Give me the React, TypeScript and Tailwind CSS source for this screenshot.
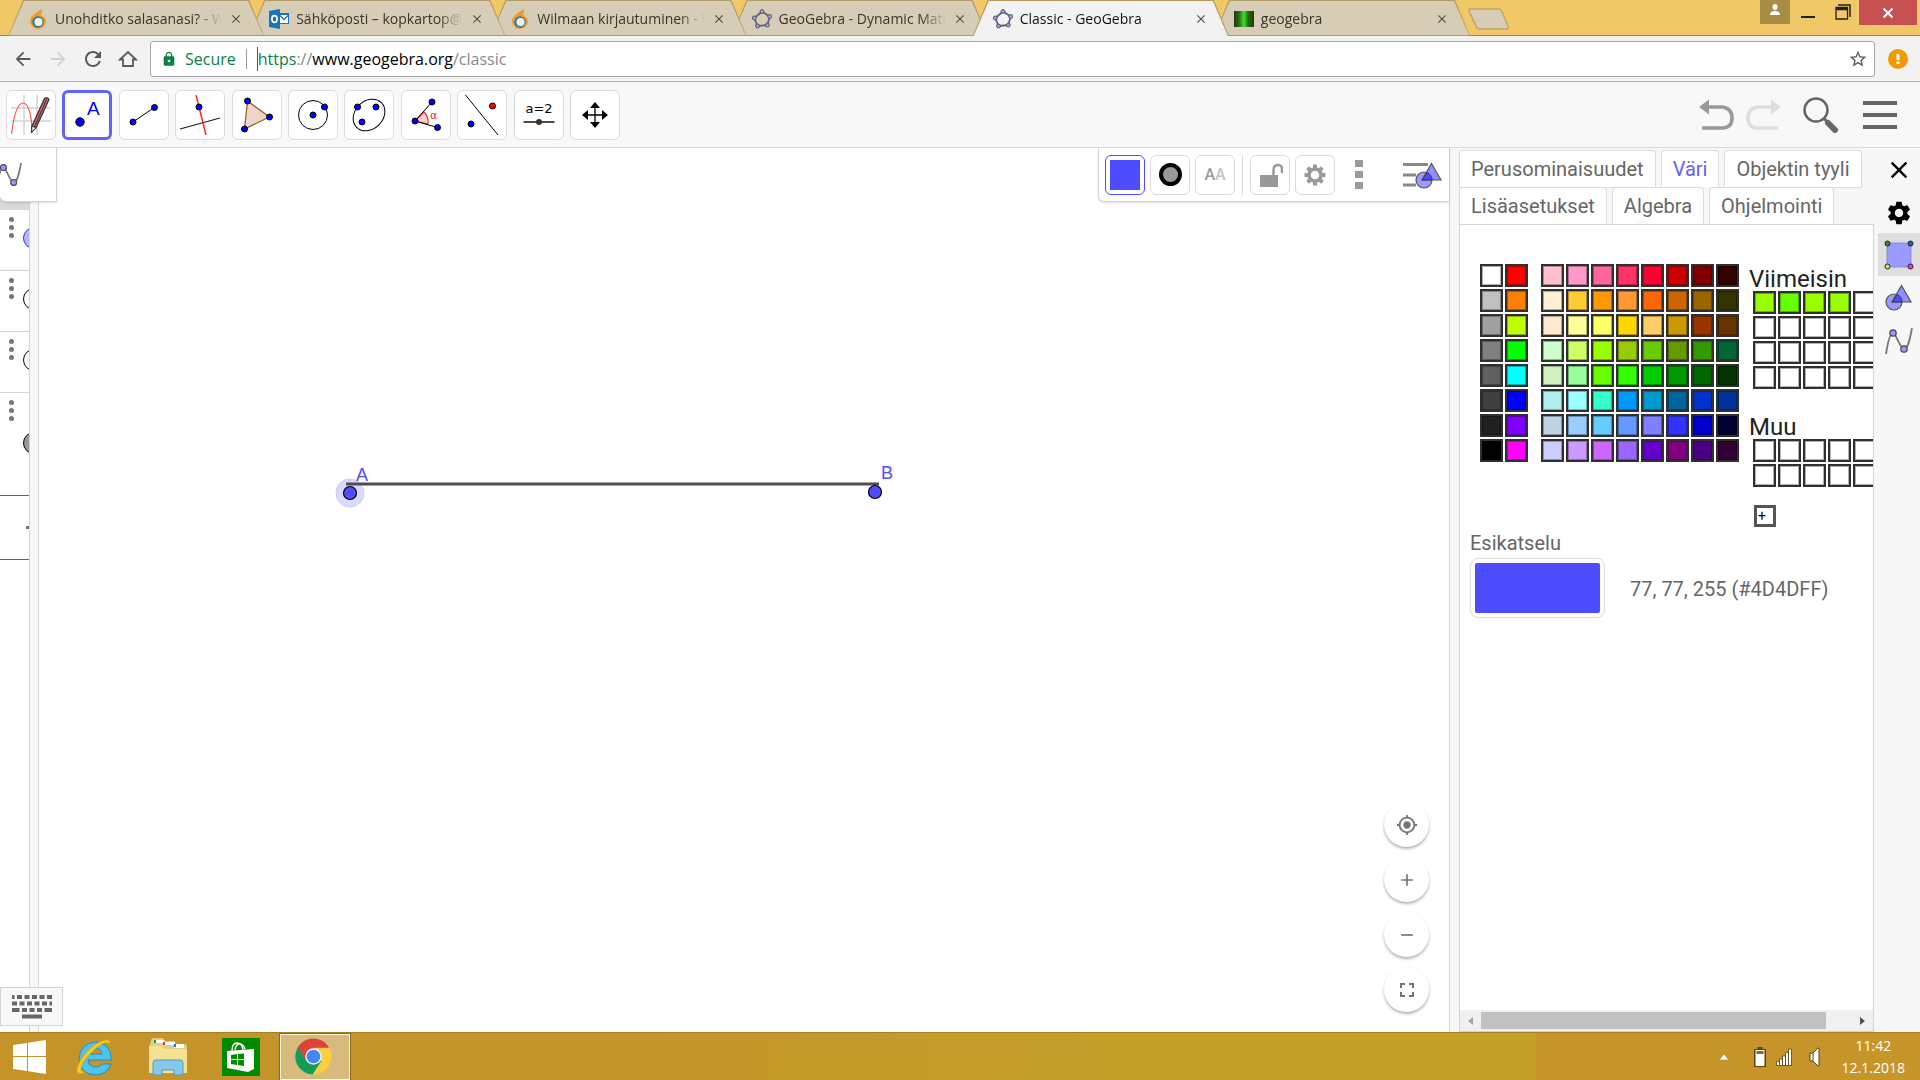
import React from "react";
import {
  MdAdd, MdArrowBack, MdArrowForward, MdClose, MdFullscreen, MdLock,
  MdMyLocation, MdRefresh, MdRemove, MdSettings, MdStarBorder,
} from "react-icons/md";

const UI = "font-['Open_Sans','Noto_Sans',sans-serif]";
const ROBOTO = "font-['Roboto',sans-serif]";

/* ---------- browser chrome ---------- */

const Flame = () => (
  <svg viewBox="0 0 18 20" className="h-[20px] w-[18px]">
    <path d="M13 0C9 3 1 6 1 12.500a8 7.500 0 0 0 16 0C17 9 14 7 11.500 5.500 13 4 13.500 2 13 0Z" fill="#ee9a2d" />
    <circle cx="9" cy="13" r="5.800" fill="#2d7fa0" />
    <circle cx="9.500" cy="13" r="4" fill="#f6f1e6" />
  </svg>
);

const Outlook = () => (
  <svg viewBox="0 0 20 20" className="h-[20px] w-[20px]">
    <rect x="10" y="4" width="10" height="11" fill="#1c74b8" />
    <path d="M11 6h8v8h-8z" fill="#fff" />
    <path d="M11 6.500l4 4 4-4" stroke="#1c74b8" strokeWidth="1.300" fill="none" />
    <path d="M0 2l11-2v20L0 18z" fill="#1c74b8" />
    <ellipse cx="5.500" cy="10" rx="2.600" ry="3.400" fill="none" stroke="#fff" strokeWidth="1.600" />
  </svg>
);

const Geo = () => (
  <svg viewBox="0 0 20 20" className="h-[20px] w-[20px]">
    <path d="M10 2.500L17.700 7.500 15.300 16 5.500 17 2.300 9z" fill="none" stroke="#666" strokeWidth="1.800" strokeLinejoin="round" />
    {[[10, 2.5], [17.7, 7.5], [15.3, 16], [5.5, 17], [2.3, 9]].map(([x, y]) => (
      <circle key={x} cx={x} cy={y} r="2" fill="#9999ff" stroke="#444" strokeWidth="0.800" />
    ))}
  </svg>
);

const Matrix = () => (
  <span className="block h-4 w-5 bg-[linear-gradient(90deg,#1c3a0c,#2c6a12_25%,#3ce22a_50%,#2c6a12_70%,#1c3a0c)]" />
);

const tabs = [
  { title: "Unohditko salasanasi? - Wilma", icon: <Flame />, z: "z-[6]" },
  { title: "Sähköposti – kopkartop@edu", icon: <Outlook />, z: "z-[5]" },
  { title: "Wilmaan kirjautuminen - Wilma", icon: <Flame />, z: "z-[4]" },
  { title: "GeoGebra - Dynamic Mathematics", icon: <Geo />, z: "z-[3]" },
  { title: "Classic - GeoGebra", icon: <Geo />, z: "z-10", active: true },
  { title: "geogebra", icon: <Matrix />, z: "z-[1]" },
];

const TabStrip = () => (
  <header className="relative flex h-9 items-start border-b border-[#9d834c] bg-[#f0c868] pl-2">
    <div role="tablist" className="-mb-px flex h-9 min-w-0 max-w-[1462px] flex-1 pr-[15px]">
      {tabs.map((t) => (
        <div key={t.title} role="tab" aria-selected={!!t.active} className={`relative -mr-[15px] h-9 min-w-0 flex-1 ${t.z}`}>
          <span className={`absolute inset-0 [clip-path:polygon(0_100%,15px_0,calc(100%-15px)_0,100%_100%)] ${t.active ? "bg-[#b8975a]" : "bg-[#b09a68]"}`} />
          <span className={`absolute inset-x-px top-px [clip-path:polygon(0_100%,15px_0,calc(100%-15px)_0,100%_100%)] ${t.active ? "bottom-0 bg-[#f2f2f2]" : "bottom-px bg-[#d7cdb7]"}`} />
          <div className={`relative flex h-9 items-center gap-[7px] pl-5 pr-[21px] pt-[2px] ${t.active ? "text-[#111]" : "text-[#38342a]"}`}>
            <span className="flex w-5 shrink-0 justify-center">{t.icon}</span>
            <span className="min-w-0 flex-1 overflow-hidden whitespace-nowrap text-sm [mask-image:linear-gradient(90deg,#000_85%,transparent)]">{t.title}</span>
            <button aria-label={`Close ${t.title}`}><MdClose className="h-[14px] w-[14px] text-[#55503f]" /></button>
          </div>
        </div>
      ))}
    </div>
    <button aria-label="New tab" className="-ml-[2px] mt-2">
      <svg viewBox="0 0 42 22" className="h-[22px] w-[42px]">
        <path d="M2 1h29q2 0 3 3l6 14q1 3-1 3H12q-3 0-4-3L1 3q0-2 1-2z" fill="#d7cdb7" stroke="#c2a566" strokeWidth="1.500" />
      </svg>
    </button>
    <div className="ml-auto flex items-start pr-[3px]">
      <button aria-label="Profile" className="flex h-6 w-[30px] justify-center bg-[#a88d49] pt-1">
        <svg viewBox="0 0 12 12" className="h-3 w-3"><ellipse cx="6" cy="3" rx="2.500" ry="3" fill="#fff" /><path d="M1 11q0-4 5-4t5 4z" fill="#fff" /></svg>
      </button>
      <button aria-label="Minimize" className="ml-[11px] mt-4 h-[2px] w-[14px] bg-[#222]" />
      <button aria-label="Restore" className="ml-5 mt-1">
        <svg viewBox="0 0 16 16" className="h-4 w-4"><path d="M3 1h12v12" fill="none" stroke="#222" strokeWidth="1.500" /><path d="M1 3.500h11.500V15H1z" fill="none" stroke="#222" strokeWidth="1.300" /><path d="M1 5h11.500" stroke="#222" strokeWidth="2.500" /></svg>
      </button>
      <button aria-label="Close" className="ml-2 flex h-[25px] w-[58px] items-center justify-center bg-[#c75050]">
        <svg viewBox="0 0 10 10" className="h-[10px] w-[10px]"><path d="M0.500 0.500l9 9M9.500 0.500l-9 9" stroke="#fff" strokeWidth="2" /></svg>
      </button>
    </div>
  </header>
);

const AddressBar = () => (
  <div className="flex h-[46px] items-center border-b border-[#b5b5b5] bg-[#f2f2f2] pl-3 pr-3 text-[#5a5a5a]">
    <button aria-label="Back"><MdArrowBack className="h-[22px] w-[22px]" /></button>
    <button aria-label="Forward" className="ml-[13px] text-[#d0d0d0]"><MdArrowForward className="h-[22px] w-[22px]" /></button>
    <button aria-label="Reload" className="ml-3"><MdRefresh className="h-6 w-6" /></button>
    <button aria-label="Home" className="ml-[13px]">
      <svg viewBox="0 0 20 20" className="h-5 w-5"><path d="M2 10.500L10 3l8 7.500h-3V17H5v-6.500z" fill="none" stroke="currentColor" strokeWidth="1.800" /></svg>
    </button>
    <div className="ml-3 flex h-9 flex-1 items-center rounded-[3px] border border-[#a6a6a6] bg-white pl-[10px] pr-[6px]">
      <MdLock className="h-4 w-4 text-[#0b8043]" />
      <span className={`ml-2 text-base text-[#0b8043] ${UI}`}>Secure</span>
      <span className="mx-[10px] h-5 w-px bg-[#999]" />
      <span className="h-6 w-px bg-[#555]" />
      <a href="https://www.geogebra.org/classic" className={`text-base text-[#888] ${UI}`}>
        <span className="text-[#0b8043]">https</span>://<span className="text-black">www.geogebra.org</span>/classic
      </a>
      <button aria-label="Bookmark" className="ml-auto"><MdStarBorder className="h-5 w-5" /></button>
    </div>
    <button aria-label="Update" className="ml-[13px] flex h-5 w-5 items-center justify-center rounded-full bg-[#f29900]">
      <svg viewBox="0 0 4 12" className="h-3 w-1"><path d="M0.500 1h3v6h-3zM0.500 8.500h3v2.500h-3z" fill="#fff" /></svg>
    </button>
  </div>
);

/* ---------- GeoGebra toolbar ---------- */

const Dot = ({ x, y, r = 3, fill = "#0000ff" }: { x: number; y: number; r?: number; fill?: string }) => (
  <circle cx={x} cy={y} r={r} fill={fill} stroke="#000" strokeWidth="1" />
);

const tools = [
  { name: "Freehand", art: <>
    <path d="M18 5v40M31 5v40M5 18h40M5 31h40" stroke="#d4d4d4" strokeWidth="1.500" />
    <path d="M5.500 44C8 24 12 13 17 13s9 11 9 30" fill="none" stroke="#f55" strokeWidth="1.200" />
    <path d="M38.500 8.500q3-2 4.500 1L30 38l-4.500 4 .500-6z" fill="#c66" stroke="#333" strokeWidth="1.200" />
    <path d="M40.500 9.500L28.500 37" stroke="#333" strokeWidth="1" /><path d="M25.500 42l.500-6 4 2z" fill="#fff" stroke="#333" />
  </> },
  { name: "Point", active: true, art: <><Dot x={18} y={32} r={4.2} /><text x="25" y="25" fontSize="19" fill="#0000ff" fontFamily="Liberation Sans">A</text></> },
  { name: "Segment", art: <><path d="M14 32L36 17" stroke="#000" /><Dot x={14} y={32} /><Dot x={35.5} y={17.5} /></> },
  { name: "Perpendicular line", art: <><path d="M5 39L45 28" stroke="#311" strokeWidth="1.200" /><path d="M21 5l10 40" stroke="#f22" strokeWidth="1.400" /><Dot x={24} y={17} /></> },
  { name: "Polygon", art: <><path d="M15.500 11L37.500 27 12.500 39z" fill="#ecd6cc" stroke="#a0521f" strokeWidth="1.200" /><Dot x={15.5} y={11} /><Dot x={37.5} y={27} /><Dot x={12.5} y={39} /></> },
  { name: "Circle", art: <><circle cx="25" cy="25" r="14.500" fill="none" stroke="#000" /><Dot x={25} y={25} /><Dot x={36.5} y={17} /></> },
  { name: "Ellipse", art: <><ellipse cx="25" cy="25" rx="17.500" ry="14" transform="rotate(-45 25 25)" fill="none" stroke="#000" /><Dot x={13.5} y={17} /><Dot x={32} y={17} /><Dot x={18} y={32} /></> },
  { name: "Angle", art: <><path d="M14 31L23 22Q28 27 27 34z" fill="#fcc" stroke="#f22" strokeWidth="1.200" /><path d="M31 12L14 31l22.500 6.500" fill="none" stroke="#000" /><text x="29" y="29" fontSize="11" fill="#f22" fontFamily="DejaVu Sans">α</text><Dot x={14} y={31} /><Dot x={31} y={12} /><Dot x={36.5} y={37.5} /></> },
  { name: "Reflect", art: <><path d="M8.500 5L41 45" stroke="#000" /><Dot x={35.5} y={16} fill="#f00" /><Dot x={14} y={34} /></> },
  { name: "Slider", art: <><text x="25" y="23" textAnchor="middle" fontSize="13" fontFamily="DejaVu Sans" fill="#000">a=2</text><path d="M9.500 32h31" stroke="#000" strokeWidth="1.400" /><circle cx="25" cy="32" r="3" fill="#333" /></> },
  { name: "Move view", art: <><path d="M25 15v20M15 25h20" stroke="#000" strokeWidth="1.300" /><path d="M25 12l5 6H20zM25 38l5-6H20zM12 25l6-5v10zM38 25l-6-5v10z" fill="#000" /></> },
];

const Toolbar = () => (
  <nav className="flex h-[66px] items-center justify-between border-b border-[#d9d9d9] bg-[#f8f8f8] pl-[6px] pr-[23px]">
    <div className="flex w-[614px] justify-between">
      {tools.map((t) => (
        <button key={t.name} aria-label={t.name} className={`flex h-[50px] w-[50px] items-center justify-center rounded-md bg-white ${t.active ? "border-[3px] border-[#6161ff]" : "border border-[#dcdcdc]"}`}>
          <svg viewBox="0 0 50 50" className="h-[50px] w-[50px] shrink-0">{t.art}</svg>
        </button>
      ))}
    </div>
    <div className="flex items-center">
      <button aria-label="Undo"><svg viewBox="0 0 36 32" className="h-8 w-9"><path d="M3 29h20q10 0 10-10T23 8H9" fill="none" stroke="#999" strokeWidth="3.500" /><path d="M0 8l10-7.500v15z" fill="#999" /></svg></button>
      <button aria-label="Redo" className="ml-[10px]"><svg viewBox="0 0 36 32" className="h-8 w-9"><path d="M33 29H13Q3 29 3 19T13 8h14" fill="none" stroke="#dedede" strokeWidth="3.500" /><path d="M36 8L26 .500v15z" fill="#dedede" /></svg></button>
      <button aria-label="Search" className="ml-[22px]"><svg viewBox="0 0 36 36" className="h-9 w-9"><circle cx="13" cy="13" r="11.500" fill="none" stroke="#666" strokeWidth="2.500" /><path d="M20.500 21l4 4" stroke="#666" strokeWidth="3" /><path d="M25 26l7 7" stroke="#666" strokeWidth="6" strokeLinecap="round" /></svg></button>
      <button aria-label="Menu" className="ml-6 flex w-[34px] flex-col gap-2"><span className="h-1 bg-[#666]" /><span className="h-1 bg-[#666]" /><span className="h-1 bg-[#666]" /></button>
    </div>
  </nav>
);

/* ---------- shared drawings ---------- */

const Curve = () => (
  <svg viewBox="0 0 28 28" className="h-7 w-7">
    <path d="M1 27C3 14 5 6 8 6s7 16 11 16S25 12 27 1" fill="none" stroke="#777" strokeWidth="1.800" />
    <circle cx="8" cy="6" r="3.200" fill="#9999ff" stroke="#445" strokeWidth="1.200" />
    <circle cx="19" cy="22" r="3.200" fill="#9999ff" stroke="#445" strokeWidth="1.200" />
  </svg>
);

const ShapeArt = () => (
  <>
    <circle cx="9" cy="18" r="8" fill="#9999ff" stroke="#555" strokeWidth="1.200" />
    <path d="M16.500 1.500L26 18H7z" fill="#8f8fff" stroke="#555" strokeWidth="1.200" />
    <path d="M12.300 10.700a8 8 0 0 1 4.700 7.300H7z" fill="#4d4dff" stroke="#335" strokeWidth="1" />
  </>
);

/* ---------- algebra list ---------- */

const Menu3 = () => (
  <span className="flex flex-col items-center gap-[3px]">
    <i className="h-[5px] w-[5px] rounded-full bg-[#757575]" /><i className="h-[5px] w-[5px] rounded-full bg-[#757575]" /><i className="h-[5px] w-[5px] rounded-full bg-[#757575]" />
  </span>
);

const rows = [
  { id: 1, box: "h-[61px]", mark: "mt-[10px] border-[#3333dd] bg-[#b8b8ff]" },
  { id: 2, box: "h-[61px]", mark: "mt-[10px] border-black bg-white" },
  { id: 3, box: "h-[61px]", mark: "mt-[10px] border-black bg-white" },
  { id: 4, box: "h-[103px]", mark: "mt-[32px] border-black bg-[#999]" },
];

const AlgebraList = () => (
  <aside className="flex w-[30px] shrink-0 flex-col overflow-hidden border-r border-[#d4d4d4] bg-white">
    <div className="h-[62px] shrink-0 bg-[#d9d9d9]" />
    {rows.map((r) => (
      <div key={r.id} className={`flex shrink-0 items-start border-b pl-[9px] pt-[7px] ${r.box} ${r.id === 4 ? "border-[#5b4fd6]" : "border-[#d4d4d4]"}`}>
        <button aria-label={`Row ${r.id} menu`}><Menu3 /></button>
        <span className={`ml-[9px] h-[22px] w-[22px] shrink-0 rounded-full border ${r.mark}`} />
      </div>
    ))}
    <div className="flex h-16 shrink-0 items-center justify-end border-b border-[#5b4fd6]"><span className="h-[3px] w-[3px] bg-[#777]" /></div>
  </aside>
);

/* ---------- graphics view ---------- */

const sb = "flex h-10 w-10 items-center justify-center rounded-md border bg-white";

const StyleBar = () => (
  <div className="absolute right-0 top-0 flex h-[54px] items-center gap-[5px] rounded-bl-md border-b border-l border-[#d4d4d4] bg-white pl-[6px] pr-[7px] shadow-sm">
    <button aria-label="Colour" className={`${sb} border-[#4d4dff]`}><span className="h-[30px] w-[30px] bg-[#4d4dff]" /></button>
    <button aria-label="Point style" className={`${sb} border-[#dcdcdc]`}><span className="h-[23px] w-[23px] rounded-full border-4 border-black bg-[#999]" /></button>
    <button aria-label="Label style" className={`${sb} border-[#dcdcdc] text-base font-medium text-[#999] ${ROBOTO}`}>A<span className="text-[#c4c4c4]">A</span></button>
    <span className="mx-[2px] h-10 w-px bg-[#dcdcdc]" />
    <button aria-label="Lock" className={`${sb} border-[#dcdcdc]`}>
      <svg viewBox="0 0 26 26" className="h-[26px] w-[26px]"><path d="M3 13h18v12H3z" fill="#999" /><path d="M16.500 13V8q0-5 4.500-5t4 5v3" fill="none" stroke="#999" strokeWidth="2.500" /></svg>
    </button>
    <button aria-label="Settings" className={`${sb} border-[#dcdcdc]`}>
      <svg viewBox="0 0 24 24" className="h-6 w-6" stroke="#999" fill="none"><circle cx="12" cy="12" r="6" strokeWidth="3.500" />
        <path d="M12 1.500v4M12 18.500v4M1.500 12h4M18.500 12h4M4.600 4.600l3 3M16.400 16.400l3 3M4.600 19.400l3-3M16.400 7.600l3-3" strokeWidth="4" /></svg>
    </button>
    <button aria-label="More" className="ml-[15px] flex flex-col gap-1"><span className="h-[7px] w-2 bg-[#999]" /><span className="h-[7px] w-2 bg-[#999]" /><span className="h-[7px] w-2 bg-[#999]" /></button>
    <button aria-label="Style bar" className="ml-[34px]">
      <svg viewBox="0 0 40 28" className="h-7 w-10"><path d="M1 3.500h25M1 14h13M1 24h13" stroke="#888" strokeWidth="3" /><g transform="translate(13 1)"><ShapeArt /></g></svg>
    </button>
  </div>
);

const zoomBtns = [
  { name: "Centre", icon: <MdMyLocation className="h-[22px] w-[22px]" /> },
  { name: "Zoom in", icon: <MdAdd className="h-5 w-5" /> },
  { name: "Zoom out", icon: <MdRemove className="h-5 w-5" /> },
  { name: "Full screen", icon: <MdFullscreen className="h-6 w-6" /> },
];

const Graphics = () => (
  <section className="relative min-w-0 flex-1 border-x border-[#d4d4d4] bg-white">
    <svg className="absolute left-0 top-0 h-full w-full" aria-label="Segment AB">
      <circle cx="311" cy="345" r="14" fill="#dadaff" stroke="#ccccf8" />
      <path d="M307 336h533" stroke="#4d4d4d" strokeWidth="3" />
      <circle cx="311" cy="345" r="6.500" fill="#4d4dff" stroke="#000" strokeWidth="1.200" />
      <circle cx="836" cy="344" r="6.500" fill="#4d4dff" stroke="#000" strokeWidth="1.200" />
      <text x="317" y="333" fontSize="18" fill="#4d4dff" fontFamily="Liberation Sans">A</text>
      <text x="842" y="331" fontSize="18" fill="#4d4dff" fontFamily="Liberation Sans">B</text>
    </svg>
    <StyleBar />
    <div className="absolute bottom-5 right-5 flex flex-col gap-[10px]">
      {zoomBtns.map((b) => (
        <button key={b.name} aria-label={b.name} className="flex h-[45px] w-[45px] items-center justify-center rounded-full bg-white text-[#757575] shadow-[0_2px_3px_rgba(0,0,0,0.3)]">{b.icon}</button>
      ))}
    </div>
  </section>
);

/* ---------- properties panel ---------- */

const tabRows = [["Perusominaisuudet", "Väri", "Objektin tyyli"], ["Lisäasetukset", "Algebra", "Ohjelmointi"]];
const basics = [
  ["#fff", "#f00"], ["#c0c0c0", "#ff8000"], ["#a0a0a0", "#bfff00"], ["#808080", "#0f0"],
  ["#606060", "#0ff"], ["#404040", "#00f"], ["#202020", "#8000ff"], ["#000", "#f0f"],
];
const palette = [
  ["#ffc0cb", "#ff99cc", "#ff6699", "#ff3366", "#ff0033", "#cc0000", "#800000", "#330000"],
  ["#ffefd5", "#ffcc33", "#ff9900", "#ff9933", "#ff6600", "#cc6600", "#996600", "#333300"],
  ["#ffe8d0", "#ffff99", "#ffff66", "#ffd700", "#ffcc66", "#cc9900", "#993300", "#663300"],
  ["#ccffcc", "#ccff66", "#99ff00", "#99cc00", "#66cc00", "#669900", "#339900", "#006633"],
  ["#d0f0c0", "#99ff99", "#66ff00", "#33ff00", "#00cc00", "#009900", "#006600", "#003300"],
  ["#afeeee", "#99ffff", "#33ffcc", "#0099ff", "#0099cc", "#006699", "#0033cc", "#003399"],
  ["#bcd4e6", "#99ccff", "#66ccff", "#6699ff", "#7f7fff", "#3333ff", "#0000cc", "#000033"],
  ["#ccccff", "#cc99ff", "#cc66ff", "#9966ff", "#6600cc", "#800080", "#4b0082", "#330033"],
];
const blank = ["#fff", "#fff", "#fff", "#fff", "#fff", "#fff"];
const recent = [["#99ff00", "#66ff00", "#99ff00", "#99ff00", "#fff", "#fff"], blank, blank, blank];

const Swatches = ({ grid }: { grid: string[][] }) => (
  <div className="flex flex-col gap-[2px]">
    {grid.map((row, i) => (
      <div key={i} className="flex gap-[2px]">
        {row.map((c, j) => (
          <button key={j} aria-label={c} style={{ backgroundColor: c }} className="h-[23px] w-[23px] shrink-0 border-2 border-[#303030] shadow-[inset_0_0_0_1px_rgba(0,0,0,0.3)]" />
        ))}
      </div>
    ))}
  </div>
);

const Properties = () => (
  <section className={`flex w-[415px] shrink-0 flex-col text-xl text-[#666] ${ROBOTO}`}>
    <div role="tablist" className="flex flex-col pt-[2px]">
      {tabRows.map((row) => (
        <div key={row[0]} className="flex gap-[5px]">
          {row.map((t) => (
            <button key={t} role="tab" aria-selected={t === "Väri"} className={`h-[37px] rounded-t border border-b-0 border-[#dcdcdc] bg-white px-[11px] ${t === "Väri" ? "text-[#6161ff]" : "shadow-[0_1px_0_#dcdcdc]"}`}>{t}</button>
          ))}
        </div>
      ))}
    </div>
    <div className="flex min-h-0 flex-1 flex-col overflow-hidden border border-[#d4d4d4] bg-white">
      <div className="flex flex-1 flex-col overflow-hidden">
        <div className="flex pl-5 pt-[39px]">
          <Swatches grid={basics} />
          <div className="ml-[13px]"><Swatches grid={palette} /></div>
          <div className="ml-[14px] flex w-[160px] shrink-0 flex-col text-2xl text-[#222]">
            <div className="-ml-1 h-[27px] leading-[30px]">Viimeisin</div>
            <Swatches grid={recent} />
            <div className="-ml-1 mt-[23px] h-[27px] leading-[30px]">Muu</div>
            <Swatches grid={[blank, blank]} />
            <button aria-label="Add colour" className="ml-px mt-[18px] flex h-[22px] w-[22px] items-center border-[3px] border-[#555] bg-white pl-px text-sm leading-4 text-black">+</button>
          </div>
        </div>
        <div className="pl-[10px]">
          <div className="mt-[2px] leading-7">Esikatselu</div>
          <div className="mt-px flex items-center">
            <div className="h-[60px] w-[135px] rounded-lg border border-[#dcdcdc] p-1"><div className="h-full rounded-xs bg-[#4d4dff]" /></div>
            <span className="ml-[25px] mt-[2px]">77, 77, 255 (#4D4DFF)</span>
          </div>
        </div>
      </div>
      <div className="flex h-[21px] items-center justify-between bg-[#f0f0f0] px-2">
        <button aria-label="Scroll left" className="h-0 w-0 border-y-[4px] border-r-[5px] border-y-transparent border-r-[#a3a3a3]" />
        <div className="mx-2 flex-1"><div className="h-[17px] w-[93%] bg-[#c1c1c1]" /></div>
        <button aria-label="Scroll right" className="h-0 w-0 border-y-[4px] border-l-[5px] border-y-transparent border-l-[#505050]" />
      </div>
    </div>
  </section>
);

const SideIcons = () => (
  <aside className="flex w-[46px] shrink-0 flex-col items-end">
    <button aria-label="Close panel" className="flex h-11 w-[42px] items-center justify-center text-black"><MdClose className="h-7 w-7" /></button>
    <button aria-label="Preferences" className="flex h-[41px] w-[42px] items-center justify-center text-black"><MdSettings className="h-7 w-7" /></button>
    <button aria-label="Objects" className="flex h-[43px] w-[42px] items-center justify-center bg-[#dedede]">
      <svg viewBox="0 0 30 30" className="h-[30px] w-[30px]"><path d="M3 3h24v24H3z" fill="#9999ff" stroke="#8888ee" />
        <circle cx="3.500" cy="3.500" r="2.500" fill="#3a8a1a" stroke="#222" /><circle cx="26.500" cy="3.500" r="2.500" fill="#1565c0" stroke="#222" /><circle cx="3.500" cy="26.500" r="2.500" fill="#e8e820" stroke="#222" /><circle cx="26.500" cy="26.500" r="2.500" fill="#e040d0" stroke="#222" /></svg>
    </button>
    <button aria-label="Graphics" className="flex h-[43px] w-[42px] items-center justify-center"><svg viewBox="0 0 28 28" className="h-7 w-7"><ShapeArt /></svg></button>
    <button aria-label="Functions" className="flex h-[43px] w-[42px] items-center justify-center"><Curve /></button>
  </aside>
);

const Keyboard = () => (
  <svg viewBox="0 0 40 24" className="h-6 w-10" stroke="#666" strokeWidth="4">
    <path d="M0 2h40" strokeDasharray="2.500 2.500 5 2.500 5 2.500 5 2.500 5 2.500 5" /><path d="M0 8.500h40" strokeDasharray="5 2.500" />
    <path d="M0 15h7.500M10 15h5M17.500 15h5M25 15h5M32.500 15H40" /><path d="M10 21.500h20" />
  </svg>
);

/* ---------- taskbar ---------- */

const WindowsLogo = () => <svg viewBox="0 0 34 34" className="h-[34px] w-[34px]"><path d="M0 5l14-2v13H0zM15 2.700L33 0v16H15zM0 17h14v14L0 29zM15 17h18v17l-18-2.700z" fill="#fff" /></svg>;
const IE = () => (
  <svg viewBox="0 0 38 38" className="h-[38px] w-[38px]">
    <path d="M36.500 22H13q1 7 8 7 4 0 6-3h9q-4 11-15.500 11Q5 36 4 21 5 5 20.500 4 36 5 36.500 22zM13 16h14q-1-6-7-6t-7 6z" fill="#4cc4f0" stroke="#1a7fc0" strokeWidth="0.800" />
    <path d="M34 8q3-7-4-6Q20 4 9 17-1 31 3 35q3 2 9-2-6 2-6-2 0-6 10-16T30 5q5-1 4 3z" fill="#f8cc20" stroke="#d49a10" strokeWidth="0.700" />
  </svg>
);
const Folder = () => (
  <svg viewBox="0 0 38 38" className="h-[38px] w-[38px]">
    <path d="M2 3q0-3 3-3h9l2 3h9l2 3h9q2 0 2 3v26H0V9z" fill="#e2cd80" />
    <path d="M5 2h10v3H5zM15 4h11v3H15zM25 6h10v4H25z" fill="#fff" /><path d="M5 2h2v3H5z" fill="#2a9a40" /><path d="M14 4h2v3h-2z" fill="#d33" /><path d="M25 6h2v3h-2z" fill="#27c" />
    <path d="M0 8h13l3 3h22v24H0z" fill="#f5e192" />
    <path d="M4 37V25q0-3 3-3h24q3 0 3 3v12h-9v-5H13v5z" fill="#86c6e6" stroke="#4a9cc8" />
  </svg>
);
const Store = () => (
  <svg viewBox="0 0 38 38" className="h-[38px] w-[38px]"><path d="M0 0h38v38H0z" fill="#008a00" />
    <path d="M10 13q0-8 5-8t6 7M13 12q1-7 6-6 3 1 4 5" fill="none" stroke="#fff" strokeWidth="1.300" /><path d="M5 13l27-2v20l-6 3-21-4z" fill="#fff" />
    <path d="M9 17l6-1v5H9zM16 16l6-.500V21h-6zM9 22h6v5l-6-1zM16 22h6v6l-6-1z" fill="#008a00" /></svg>
);
const Chrome = () => (
  <svg viewBox="0 0 38 38" className="h-[37px] w-[37px]">
    <path d="M19 10h16a18.500 18.500 0 0 1-17 27.500L27 23z" fill="#ffcd40" /><path d="M19 19L3 9.500A18.500 18.500 0 0 0 18 37.500l9-14z" fill="#0f9d58" />
    <path d="M3 9.500L11 23l8-4 0-9h16A18.500 18.500 0 0 0 3 9.500z" fill="#db4437" /><circle cx="19" cy="19" r="8.500" fill="#f1f1f1" /><circle cx="19" cy="19" r="7" fill="#4285f4" />
  </svg>
);

const Taskbar = () => (
  <footer className={`flex h-12 shrink-0 items-center border-t border-[#a97f20] bg-[linear-gradient(90deg,#c4942a_0%,#c4962a_30%,#c4a02a_60%,#c4a02a_80%,#c6962b_80%,#c6962b_100%)] pl-[13px] ${UI}`}>
    <button aria-label="Start"><WindowsLogo /></button>
    <button aria-label="Internet Explorer" className="ml-7"><IE /></button>
    <button aria-label="File Explorer" className="ml-9"><Folder /></button>
    <button aria-label="Store" className="ml-[35px]"><Store /></button>
    <button aria-label="Chrome" className="ml-5 flex h-[46px] w-[70px] items-center justify-center border border-[#fdf6e0] bg-[#d6bb7c] pr-[3px] outline outline-[#8a6a1c]"><Chrome /></button>
    <div className="ml-auto flex h-full items-center pr-[15px]">
      <button aria-label="Show hidden icons"><svg viewBox="0 0 10 6" className="h-[6px] w-[10px]"><path d="M0 6l5-6 5 6z" fill="#fff" stroke="#7a5c14" strokeWidth="0.500" /></svg></button>
      <svg viewBox="0 0 12 20" className="ml-[25px] h-5 w-3"><path d="M3.500 0h5v2H12v18H0V2h3.500z" fill="#5a4410" /><path d="M1.500 3h9v16h-9z" fill="#fff" /><path d="M2.500 4h7v3h-7z" fill="#8a6a1c" /></svg>
      <svg viewBox="0 0 16 18" className="ml-[10px] h-[18px] w-4" fill="#fff" stroke="#5a4410" strokeWidth="0.800"><path d="M.5 13.500h3V17.500h-3zM3.500 11h3v6.500h-3zM6.500 8h3v9.500h-3zM9.500 4.500h3v13h-3zM12.500 1h3v16.500h-3z" /></svg>
      <svg viewBox="0 0 11 20" className="ml-[17px] h-5 w-[11px]"><path d="M1 6h3l5-5h1v18H9l-5-5H1z" fill="#fff" stroke="#5a4410" /><path d="M4 6v8" stroke="#5a4410" /></svg>
      <div className="ml-[22px] flex h-full flex-col justify-center pt-px text-center text-sm leading-[22px] text-white"><span>11:42</span><span>12.1.2018</span></div>
    </div>
  </footer>
);

export default function App() {
  return (
    <div className={`flex h-screen min-h-[640px] flex-col overflow-hidden bg-[#f2f2f2] ${UI}`}>
      <TabStrip />
      <AddressBar />
      <Toolbar />
      <main className="relative flex min-h-0 flex-1 bg-[#f7f7f7]">
        <AlgebraList />
        <div className="w-2 shrink-0" />
        <Graphics />
        <div className="w-[9px] shrink-0" />
        <Properties />
        <SideIcons />
        <div className="absolute left-0 top-0 flex h-[54px] w-[57px] items-center rounded-bl-md border-b border-r border-[#d4d4d4] bg-white shadow-sm">
          <button aria-label="Algebra style bar" className="-ml-1 flex w-[26px] justify-end overflow-hidden"><Curve /></button>
        </div>
        <button aria-label="Keyboard" className="absolute bottom-[6px] left-0 flex h-[39px] w-[63px] items-center justify-center border border-[#d4d4d4] bg-[#f8f8f8]"><Keyboard /></button>
      </main>
      <Taskbar />
    </div>
  );
}
